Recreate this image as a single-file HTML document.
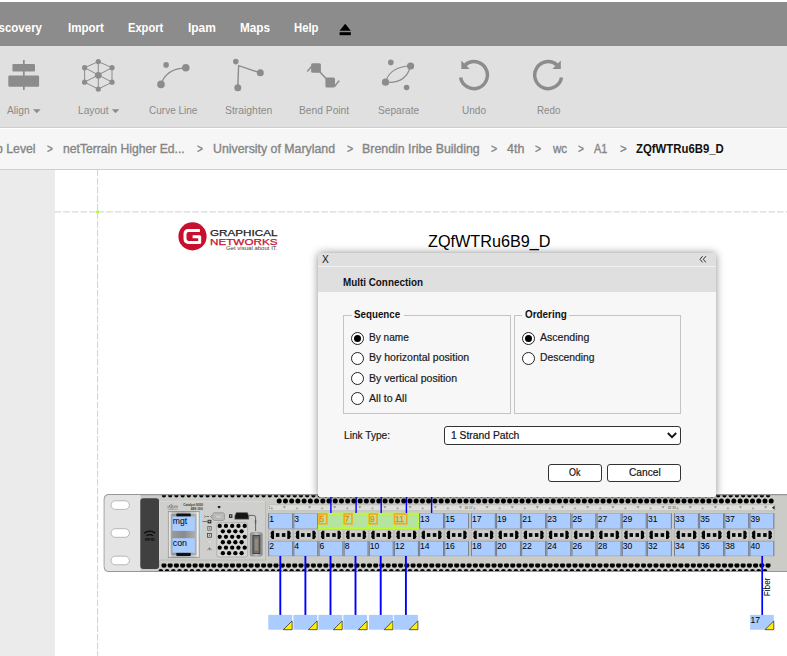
<!DOCTYPE html>
<html><head><meta charset="utf-8"><title>Multi Connection</title>
<style>
*{box-sizing:border-box}
html,body{margin:0;padding:0}
body{width:787px;height:656px;overflow:hidden;position:relative;background:#fff;font-family:"Liberation Sans",sans-serif}
.abs{position:absolute}
.tx{position:absolute;white-space:nowrap;display:inline-block;transform-origin:0 50%}
#menubar{left:0;top:2px;width:787px;height:43.5px;background:#8c8c8c}
#toolbar{left:0;top:45.5px;width:787px;height:82.5px;background:#e0e0e0;border-bottom:1px solid #cdcdcd}
#crumbs{left:0;top:128.5px;width:787px;height:41px;background:#f6f6f6;border-bottom:1px solid #cecece}
#leftpanel{left:0;top:169.5px;width:54.6px;height:487px;background:#ebebeb}
#canvas{left:54.6px;top:169.5px;width:733px;height:487px;background:#fff}
svg{position:absolute;left:0;top:0;overflow:hidden}
svg text{font-family:"Liberation Sans",sans-serif}
#dialog{left:317.5px;top:253.3px;width:398.7px;height:243.4px;background:#f7f7f7;border-radius:3px;box-shadow:0 0 8px rgba(0,0,0,.45)}
#dlgtop{left:0;top:0;width:100%;height:39px;background:#dfdfdf;border-radius:3px 3px 0 0}
#dlgsep{left:0;top:12.5px;width:100%;height:1px;background:#f0f0f0}
#dlgbody{left:0;top:38.4px;width:100%;height:205px;background:#f7f7f7;border-radius:3px}
.fs{position:absolute;border:1px solid #c4c4c4}
.lg{position:absolute;background:#f7f7f7;height:3px}
.radio{position:absolute;width:13px;height:13px;border-radius:50%;border:1px solid #222;background:#fff}
.radio.on::after{content:"";position:absolute;left:2px;top:2px;width:7px;height:7px;border-radius:50%;background:#000}
.btn{position:absolute;border:1px solid #333;border-radius:3px;background:#fff}

</style></head><body>
<div id="menubar" class="abs"></div>
<div id="toolbar" class="abs"></div>
<div id="crumbs" class="abs"></div>
<div id="leftpanel" class="abs"></div>
<div id="canvas" class="abs"></div>
<svg id="icons" width="787" height="170" viewBox="0 0 787 170">
<!-- eject -->
<path d="M339.6 30.8 L345.2 23.8 L350.8 30.8 Z" fill="#000"/><rect x="339.6" y="32.2" width="11.2" height="3" fill="#000"/>
<g fill="#8c8c8c" stroke="none">
<!-- align -->
<rect x="23" y="60" width="1.7" height="30"/><rect x="12.4" y="64" width="22.6" height="7.5" rx="1"/><rect x="8.3" y="75.6" width="30.8" height="11.1" rx="1.2"/>
<!-- caret -->
<path d="M33 109.2 h7.6 l-3.8 4 z"/><path d="M111.8 109.2 h7.6 l-3.8 4 z"/>
</g>
<!-- layout -->
<g stroke="#8c8c8c" stroke-width="1" fill="none">
<path d="M98.3 61.6 L112 67.7 L112 82.2 L98.3 89.1 L84.6 82.2 L84.6 67.7 Z"/>
<path d="M98.3 61.6 V89.1 M84.6 67.7 L112 82.2 M112 67.7 L84.6 82.2"/>
</g>
<g fill="#8c8c8c">
<circle cx="98.3" cy="61.6" r="2.6"/><circle cx="112" cy="67.7" r="2.6"/><circle cx="112" cy="82.2" r="2.6"/><circle cx="98.3" cy="89.1" r="2.6"/><circle cx="84.6" cy="82.2" r="2.6"/><circle cx="84.6" cy="67.7" r="2.6"/><circle cx="98.3" cy="75.3" r="3.4"/>
</g>
<!-- curve line -->
<path d="M161 84.4 Q166 68.5 185.8 67.8" stroke="#8c8c8c" stroke-width="1.3" fill="none"/>
<g fill="#8c8c8c"><circle cx="161" cy="84.4" r="3.8"/><circle cx="185.8" cy="67.8" r="3.8"/><circle cx="166.1" cy="64.9" r="2.8"/></g>
<!-- straighten -->
<path d="M260.3 72.8 L238.6 65.7 L237.8 87.7" stroke="#8c8c8c" stroke-width="1.4" fill="none"/>
<g fill="#8c8c8c"><circle cx="235.8" cy="61.6" r="2.8"/><circle cx="260.3" cy="72.8" r="3.5"/><circle cx="237.8" cy="87.7" r="3.5"/></g>
<!-- bend point -->
<g fill="#8c8c8c"><rect x="311.1" y="63.2" width="9.8" height="9.6" rx="1.5"/><rect x="325.4" y="77.6" width="9.6" height="10" rx="1.5"/></g>
<path d="M307.3 71.5 L312 66 M319 71 L327 79.5 M334.5 86.5 L339.2 80.6" stroke="#8c8c8c" stroke-width="1.5" fill="none"/>
<!-- separate -->
<path d="M385.5 82.2 Q390 66.5 410.6 66 M385.5 82.2 Q406 84 410.6 66" stroke="#8c8c8c" stroke-width="1.1" fill="none"/>
<g fill="#8c8c8c"><circle cx="385.5" cy="82.2" r="3.6"/><circle cx="410.6" cy="66" r="3.6"/><circle cx="390.8" cy="62.4" r="2.8"/><circle cx="406.6" cy="87.5" r="2.8"/></g>
<!-- undo -->
<path d="M465.2 64.8 A13.5 13.5 0 1 1 460.6 77.5" stroke="#8c8c8c" stroke-width="3.5" fill="none"/>
<path d="M461.3 60.6 L461.3 69 L469.7 69 Z" fill="#8c8c8c"/>
<!-- redo -->
<path d="M556.9 64.8 A13.5 13.5 0 1 0 561.5 77.5" stroke="#8c8c8c" stroke-width="3.5" fill="none"/>
<path d="M560.8 60.6 L560.8 69 L552.4 69 Z" fill="#8c8c8c"/>
</svg>
<svg id="diagram" width="787" height="656" viewBox="0 0 787 656">
<path d="M97.6 169.5 V656" stroke="#cccccc" stroke-width="0.9" stroke-dasharray="6.7 1.9" fill="none"/>
<path d="M54.6 211.9 H787" stroke="#dadada" stroke-width="1.4" stroke-dasharray="6.7 1.9" fill="none"/>
<rect x="96.2" y="210.7" width="2.7" height="2.5" fill="#b2f52a"/>
<circle cx="192.5" cy="236.4" r="14.1" fill="#c8102e"/>
<path d="M199.9 230.6 H188.6 Q185 230.6 185 234.2 V238.8 Q185 242.4 188.6 242.4 H199.7 V236.7 H192.6" stroke="#fff" stroke-width="3" fill="none" stroke-linejoin="round"/>
<text x="210" y="236.1" font-size="8.7" fill="#222" stroke="#222" stroke-width="0.25" textLength="67.5" lengthAdjust="spacingAndGlyphs">GRAPHICAL</text>
<text x="210" y="244.8" font-size="8.7" fill="#c8102e" stroke="#c8102e" stroke-width="0.25" textLength="67.5" lengthAdjust="spacingAndGlyphs">NETWORKS</text>
<text x="226" y="250.2" font-size="4.6" fill="#444" textLength="51.5" lengthAdjust="spacingAndGlyphs">Get visual about IT.</text>
<path d="M109.5 494.6 H800 V571.5 H109.5 Q104.2 571.5 104.2 566.5 V499.6 Q104.2 494.6 109.5 494.6 Z" fill="#cbcbc8" stroke="#979797" stroke-width="1.1"/>
<path d="M109.5 495 H140.5 V571.1 H109.5 Q104.6 571.1 104.6 566.5 V499.6 Q104.6 495 109.5 495 Z" fill="#e4e4e4"/>
<rect x="111" y="500.8" width="18.4" height="8.6" rx="4.3" fill="#fff" stroke="#b0b0b0" stroke-width="0.9"/>
<rect x="111" y="528.7" width="18.4" height="8.6" rx="4.3" fill="#fff" stroke="#b0b0b0" stroke-width="0.9"/>
<rect x="111" y="556.2" width="18.4" height="8.6" rx="4.3" fill="#fff" stroke="#b0b0b0" stroke-width="0.9"/>
<rect x="140.3" y="498.3" width="18.8" height="70.6" rx="3" fill="#404040"/>
<path d="M144.2 533.3 Q149.7 529 155.3 533.3" stroke="#0a0a0a" stroke-width="1.3" fill="none"/><path d="M146.4 535.8 Q149.7 533.4 153 535.8" stroke="#0a0a0a" stroke-width="1.2" fill="none"/>
<text x="145.1" y="540.6" font-size="3.4" font-weight="bold" fill="#0a0a0a" textLength="9.8" lengthAdjust="spacingAndGlyphs">RFID</text>
<g fill="#000">
<clipPath id="cl"><rect x="100" y="495.3" width="700" height="75.7"/></clipPath>
<clipPath id="cl2"><rect x="100" y="563.5" width="700" height="10"/></clipPath>
<g clip-path="url(#cl)">
<circle cx="163.95" cy="495.4" r="2.1"/><circle cx="170.18" cy="495.4" r="2.1"/><circle cx="176.41" cy="495.4" r="2.1"/><circle cx="182.63" cy="495.4" r="2.1"/><circle cx="188.86" cy="495.4" r="2.1"/><circle cx="195.09" cy="495.4" r="2.1"/><circle cx="201.32" cy="495.4" r="2.1"/><circle cx="207.55" cy="495.4" r="2.1"/><circle cx="213.77" cy="495.4" r="2.1"/><circle cx="220.00" cy="495.4" r="2.1"/><circle cx="226.23" cy="495.4" r="2.1"/><circle cx="232.46" cy="495.4" r="2.1"/><circle cx="238.69" cy="495.4" r="2.1"/><circle cx="244.91" cy="495.4" r="2.1"/><circle cx="251.14" cy="495.4" r="2.1"/><circle cx="257.37" cy="495.4" r="2.1"/><circle cx="263.60" cy="495.4" r="2.1"/><circle cx="269.83" cy="495.4" r="2.1"/><circle cx="276.05" cy="495.4" r="2.1"/><circle cx="282.28" cy="495.4" r="2.1"/><circle cx="288.51" cy="495.4" r="2.1"/><circle cx="294.74" cy="495.4" r="2.1"/><circle cx="300.97" cy="495.4" r="2.1"/><circle cx="307.19" cy="495.4" r="2.1"/><circle cx="313.42" cy="495.4" r="2.1"/><circle cx="319.65" cy="495.4" r="2.1"/><circle cx="325.88" cy="495.4" r="2.1"/><circle cx="332.11" cy="495.4" r="2.1"/><circle cx="338.33" cy="495.4" r="2.1"/><circle cx="344.56" cy="495.4" r="2.1"/><circle cx="350.79" cy="495.4" r="2.1"/><circle cx="357.02" cy="495.4" r="2.1"/><circle cx="363.25" cy="495.4" r="2.1"/><circle cx="369.47" cy="495.4" r="2.1"/><circle cx="375.70" cy="495.4" r="2.1"/><circle cx="381.93" cy="495.4" r="2.1"/><circle cx="388.16" cy="495.4" r="2.1"/><circle cx="394.39" cy="495.4" r="2.1"/><circle cx="400.61" cy="495.4" r="2.1"/><circle cx="406.84" cy="495.4" r="2.1"/><circle cx="413.07" cy="495.4" r="2.1"/><circle cx="419.30" cy="495.4" r="2.1"/><circle cx="425.53" cy="495.4" r="2.1"/><circle cx="431.75" cy="495.4" r="2.1"/><circle cx="437.98" cy="495.4" r="2.1"/><circle cx="444.21" cy="495.4" r="2.1"/><circle cx="450.44" cy="495.4" r="2.1"/><circle cx="456.67" cy="495.4" r="2.1"/><circle cx="462.89" cy="495.4" r="2.1"/><circle cx="469.12" cy="495.4" r="2.1"/><circle cx="475.35" cy="495.4" r="2.1"/><circle cx="481.58" cy="495.4" r="2.1"/><circle cx="487.81" cy="495.4" r="2.1"/><circle cx="494.03" cy="495.4" r="2.1"/><circle cx="500.26" cy="495.4" r="2.1"/><circle cx="506.49" cy="495.4" r="2.1"/><circle cx="512.72" cy="495.4" r="2.1"/><circle cx="518.95" cy="495.4" r="2.1"/><circle cx="525.17" cy="495.4" r="2.1"/><circle cx="531.40" cy="495.4" r="2.1"/><circle cx="537.63" cy="495.4" r="2.1"/><circle cx="543.86" cy="495.4" r="2.1"/><circle cx="550.09" cy="495.4" r="2.1"/><circle cx="556.31" cy="495.4" r="2.1"/><circle cx="562.54" cy="495.4" r="2.1"/><circle cx="568.77" cy="495.4" r="2.1"/><circle cx="575.00" cy="495.4" r="2.1"/><circle cx="581.23" cy="495.4" r="2.1"/><circle cx="587.45" cy="495.4" r="2.1"/><circle cx="593.68" cy="495.4" r="2.1"/><circle cx="599.91" cy="495.4" r="2.1"/><circle cx="606.14" cy="495.4" r="2.1"/><circle cx="612.37" cy="495.4" r="2.1"/><circle cx="618.59" cy="495.4" r="2.1"/><circle cx="624.82" cy="495.4" r="2.1"/><circle cx="631.05" cy="495.4" r="2.1"/><circle cx="637.28" cy="495.4" r="2.1"/><circle cx="643.51" cy="495.4" r="2.1"/><circle cx="649.73" cy="495.4" r="2.1"/><circle cx="655.96" cy="495.4" r="2.1"/><circle cx="662.19" cy="495.4" r="2.1"/><circle cx="668.42" cy="495.4" r="2.1"/><circle cx="674.65" cy="495.4" r="2.1"/><circle cx="680.87" cy="495.4" r="2.1"/><circle cx="687.10" cy="495.4" r="2.1"/><circle cx="693.33" cy="495.4" r="2.1"/><circle cx="699.56" cy="495.4" r="2.1"/><circle cx="705.79" cy="495.4" r="2.1"/><circle cx="712.01" cy="495.4" r="2.1"/><circle cx="718.24" cy="495.4" r="2.1"/><circle cx="724.47" cy="495.4" r="2.1"/><circle cx="730.70" cy="495.4" r="2.1"/><circle cx="736.93" cy="495.4" r="2.1"/><circle cx="743.15" cy="495.4" r="2.1"/><circle cx="749.38" cy="495.4" r="2.1"/><circle cx="755.61" cy="495.4" r="2.1"/><circle cx="761.84" cy="495.4" r="2.1"/><circle cx="768.07" cy="495.4" r="2.1"/>
<circle cx="279.20" cy="500.9" r="2.5"/><circle cx="285.43" cy="500.9" r="2.5"/><circle cx="291.66" cy="500.9" r="2.5"/><circle cx="297.88" cy="500.9" r="2.5"/><circle cx="304.11" cy="500.9" r="2.5"/><circle cx="310.34" cy="500.9" r="2.5"/><circle cx="316.57" cy="500.9" r="2.5"/><circle cx="322.80" cy="500.9" r="2.5"/><circle cx="329.02" cy="500.9" r="2.5"/><circle cx="335.25" cy="500.9" r="2.5"/><circle cx="341.48" cy="500.9" r="2.5"/><circle cx="347.71" cy="500.9" r="2.5"/><circle cx="353.94" cy="500.9" r="2.5"/><circle cx="360.16" cy="500.9" r="2.5"/><circle cx="366.39" cy="500.9" r="2.5"/><circle cx="372.62" cy="500.9" r="2.5"/><circle cx="378.85" cy="500.9" r="2.5"/><circle cx="385.08" cy="500.9" r="2.5"/><circle cx="391.30" cy="500.9" r="2.5"/><circle cx="397.53" cy="500.9" r="2.5"/><circle cx="403.76" cy="500.9" r="2.5"/><circle cx="409.99" cy="500.9" r="2.5"/><circle cx="416.22" cy="500.9" r="2.5"/><circle cx="422.44" cy="500.9" r="2.5"/><circle cx="428.67" cy="500.9" r="2.5"/><circle cx="434.90" cy="500.9" r="2.5"/><circle cx="441.13" cy="500.9" r="2.5"/><circle cx="447.36" cy="500.9" r="2.5"/><circle cx="453.58" cy="500.9" r="2.5"/><circle cx="459.81" cy="500.9" r="2.5"/><circle cx="466.04" cy="500.9" r="2.5"/><circle cx="472.27" cy="500.9" r="2.5"/><circle cx="478.50" cy="500.9" r="2.5"/><circle cx="484.72" cy="500.9" r="2.5"/><circle cx="490.95" cy="500.9" r="2.5"/><circle cx="497.18" cy="500.9" r="2.5"/><circle cx="503.41" cy="500.9" r="2.5"/><circle cx="509.64" cy="500.9" r="2.5"/><circle cx="515.86" cy="500.9" r="2.5"/><circle cx="522.09" cy="500.9" r="2.5"/><circle cx="528.32" cy="500.9" r="2.5"/><circle cx="534.55" cy="500.9" r="2.5"/><circle cx="540.78" cy="500.9" r="2.5"/><circle cx="547.00" cy="500.9" r="2.5"/><circle cx="553.23" cy="500.9" r="2.5"/><circle cx="559.46" cy="500.9" r="2.5"/><circle cx="565.69" cy="500.9" r="2.5"/><circle cx="571.92" cy="500.9" r="2.5"/><circle cx="578.14" cy="500.9" r="2.5"/><circle cx="584.37" cy="500.9" r="2.5"/><circle cx="590.60" cy="500.9" r="2.5"/><circle cx="596.83" cy="500.9" r="2.5"/><circle cx="603.06" cy="500.9" r="2.5"/><circle cx="609.28" cy="500.9" r="2.5"/><circle cx="615.51" cy="500.9" r="2.5"/><circle cx="621.74" cy="500.9" r="2.5"/><circle cx="627.97" cy="500.9" r="2.5"/><circle cx="634.20" cy="500.9" r="2.5"/><circle cx="640.42" cy="500.9" r="2.5"/><circle cx="646.65" cy="500.9" r="2.5"/><circle cx="652.88" cy="500.9" r="2.5"/><circle cx="659.11" cy="500.9" r="2.5"/><circle cx="665.34" cy="500.9" r="2.5"/><circle cx="671.56" cy="500.9" r="2.5"/><circle cx="677.79" cy="500.9" r="2.5"/><circle cx="684.02" cy="500.9" r="2.5"/><circle cx="690.25" cy="500.9" r="2.5"/><circle cx="696.48" cy="500.9" r="2.5"/><circle cx="702.70" cy="500.9" r="2.5"/><circle cx="708.93" cy="500.9" r="2.5"/><circle cx="715.16" cy="500.9" r="2.5"/><circle cx="721.39" cy="500.9" r="2.5"/><circle cx="727.62" cy="500.9" r="2.5"/><circle cx="733.84" cy="500.9" r="2.5"/><circle cx="740.07" cy="500.9" r="2.5"/><circle cx="746.30" cy="500.9" r="2.5"/><circle cx="752.53" cy="500.9" r="2.5"/><circle cx="758.76" cy="500.9" r="2.5"/><circle cx="764.98" cy="500.9" r="2.5"/><circle cx="771.21" cy="500.9" r="2.5"/>
<circle cx="160.85" cy="571.5" r="2.4"/><circle cx="167.08" cy="571.5" r="2.4"/><circle cx="173.31" cy="571.5" r="2.4"/><circle cx="179.53" cy="571.5" r="2.4"/><circle cx="185.76" cy="571.5" r="2.4"/><circle cx="191.99" cy="571.5" r="2.4"/><circle cx="198.22" cy="571.5" r="2.4"/><circle cx="204.45" cy="571.5" r="2.4"/><circle cx="210.67" cy="571.5" r="2.4"/><circle cx="216.90" cy="571.5" r="2.4"/><circle cx="223.13" cy="571.5" r="2.4"/><circle cx="229.36" cy="571.5" r="2.4"/><circle cx="235.59" cy="571.5" r="2.4"/><circle cx="241.81" cy="571.5" r="2.4"/><circle cx="248.04" cy="571.5" r="2.4"/><circle cx="254.27" cy="571.5" r="2.4"/><circle cx="260.50" cy="571.5" r="2.4"/><circle cx="266.73" cy="571.5" r="2.4"/><circle cx="272.95" cy="571.5" r="2.4"/><circle cx="279.18" cy="571.5" r="2.4"/><circle cx="285.41" cy="571.5" r="2.4"/><circle cx="291.64" cy="571.5" r="2.4"/><circle cx="297.87" cy="571.5" r="2.4"/><circle cx="304.09" cy="571.5" r="2.4"/><circle cx="310.32" cy="571.5" r="2.4"/><circle cx="316.55" cy="571.5" r="2.4"/><circle cx="322.78" cy="571.5" r="2.4"/><circle cx="329.01" cy="571.5" r="2.4"/><circle cx="335.23" cy="571.5" r="2.4"/><circle cx="341.46" cy="571.5" r="2.4"/><circle cx="347.69" cy="571.5" r="2.4"/><circle cx="353.92" cy="571.5" r="2.4"/><circle cx="360.15" cy="571.5" r="2.4"/><circle cx="366.37" cy="571.5" r="2.4"/><circle cx="372.60" cy="571.5" r="2.4"/><circle cx="378.83" cy="571.5" r="2.4"/><circle cx="385.06" cy="571.5" r="2.4"/><circle cx="391.29" cy="571.5" r="2.4"/><circle cx="397.51" cy="571.5" r="2.4"/><circle cx="403.74" cy="571.5" r="2.4"/><circle cx="409.97" cy="571.5" r="2.4"/><circle cx="416.20" cy="571.5" r="2.4"/><circle cx="422.43" cy="571.5" r="2.4"/><circle cx="428.65" cy="571.5" r="2.4"/><circle cx="434.88" cy="571.5" r="2.4"/><circle cx="441.11" cy="571.5" r="2.4"/><circle cx="447.34" cy="571.5" r="2.4"/><circle cx="453.57" cy="571.5" r="2.4"/><circle cx="459.79" cy="571.5" r="2.4"/><circle cx="466.02" cy="571.5" r="2.4"/><circle cx="472.25" cy="571.5" r="2.4"/><circle cx="478.48" cy="571.5" r="2.4"/><circle cx="484.71" cy="571.5" r="2.4"/><circle cx="490.93" cy="571.5" r="2.4"/><circle cx="497.16" cy="571.5" r="2.4"/><circle cx="503.39" cy="571.5" r="2.4"/><circle cx="509.62" cy="571.5" r="2.4"/><circle cx="515.85" cy="571.5" r="2.4"/><circle cx="522.07" cy="571.5" r="2.4"/><circle cx="528.30" cy="571.5" r="2.4"/><circle cx="534.53" cy="571.5" r="2.4"/><circle cx="540.76" cy="571.5" r="2.4"/><circle cx="546.99" cy="571.5" r="2.4"/><circle cx="553.21" cy="571.5" r="2.4"/><circle cx="559.44" cy="571.5" r="2.4"/><circle cx="565.67" cy="571.5" r="2.4"/><circle cx="571.90" cy="571.5" r="2.4"/><circle cx="578.13" cy="571.5" r="2.4"/><circle cx="584.35" cy="571.5" r="2.4"/><circle cx="590.58" cy="571.5" r="2.4"/><circle cx="596.81" cy="571.5" r="2.4"/><circle cx="603.04" cy="571.5" r="2.4"/><circle cx="609.27" cy="571.5" r="2.4"/><circle cx="615.49" cy="571.5" r="2.4"/><circle cx="621.72" cy="571.5" r="2.4"/><circle cx="627.95" cy="571.5" r="2.4"/><circle cx="634.18" cy="571.5" r="2.4"/><circle cx="640.41" cy="571.5" r="2.4"/><circle cx="646.63" cy="571.5" r="2.4"/><circle cx="652.86" cy="571.5" r="2.4"/><circle cx="659.09" cy="571.5" r="2.4"/><circle cx="665.32" cy="571.5" r="2.4"/><circle cx="671.55" cy="571.5" r="2.4"/><circle cx="677.77" cy="571.5" r="2.4"/><circle cx="684.00" cy="571.5" r="2.4"/><circle cx="690.23" cy="571.5" r="2.4"/><circle cx="696.46" cy="571.5" r="2.4"/><circle cx="702.69" cy="571.5" r="2.4"/><circle cx="708.91" cy="571.5" r="2.4"/><circle cx="715.14" cy="571.5" r="2.4"/><circle cx="721.37" cy="571.5" r="2.4"/><circle cx="727.60" cy="571.5" r="2.4"/><circle cx="733.83" cy="571.5" r="2.4"/><circle cx="740.05" cy="571.5" r="2.4"/><circle cx="746.28" cy="571.5" r="2.4"/><circle cx="752.51" cy="571.5" r="2.4"/><circle cx="758.74" cy="571.5" r="2.4"/><circle cx="764.97" cy="571.5" r="2.4"/>
</g><g clip-path="url(#cl2)">
<circle cx="163.95" cy="565.2" r="2.5"/><circle cx="170.18" cy="565.2" r="2.5"/><circle cx="176.41" cy="565.2" r="2.5"/><circle cx="182.63" cy="565.2" r="2.5"/><circle cx="188.86" cy="565.2" r="2.5"/><circle cx="195.09" cy="565.2" r="2.5"/><circle cx="201.32" cy="565.2" r="2.5"/><circle cx="207.55" cy="565.2" r="2.5"/><circle cx="213.77" cy="565.2" r="2.5"/><circle cx="220.00" cy="565.2" r="2.5"/><circle cx="226.23" cy="565.2" r="2.5"/><circle cx="232.46" cy="565.2" r="2.5"/><circle cx="238.69" cy="565.2" r="2.5"/><circle cx="244.91" cy="565.2" r="2.5"/><circle cx="251.14" cy="565.2" r="2.5"/><circle cx="257.37" cy="565.2" r="2.5"/><circle cx="263.60" cy="565.2" r="2.5"/><circle cx="269.83" cy="565.2" r="2.5"/><circle cx="276.05" cy="565.2" r="2.5"/><circle cx="282.28" cy="565.2" r="2.5"/><circle cx="288.51" cy="565.2" r="2.5"/><circle cx="294.74" cy="565.2" r="2.5"/><circle cx="300.97" cy="565.2" r="2.5"/><circle cx="307.19" cy="565.2" r="2.5"/><circle cx="313.42" cy="565.2" r="2.5"/><circle cx="319.65" cy="565.2" r="2.5"/><circle cx="325.88" cy="565.2" r="2.5"/><circle cx="332.11" cy="565.2" r="2.5"/><circle cx="338.33" cy="565.2" r="2.5"/><circle cx="344.56" cy="565.2" r="2.5"/><circle cx="350.79" cy="565.2" r="2.5"/><circle cx="357.02" cy="565.2" r="2.5"/><circle cx="363.25" cy="565.2" r="2.5"/><circle cx="369.47" cy="565.2" r="2.5"/><circle cx="375.70" cy="565.2" r="2.5"/><circle cx="381.93" cy="565.2" r="2.5"/><circle cx="388.16" cy="565.2" r="2.5"/><circle cx="394.39" cy="565.2" r="2.5"/><circle cx="400.61" cy="565.2" r="2.5"/><circle cx="406.84" cy="565.2" r="2.5"/><circle cx="413.07" cy="565.2" r="2.5"/><circle cx="419.30" cy="565.2" r="2.5"/><circle cx="425.53" cy="565.2" r="2.5"/><circle cx="431.75" cy="565.2" r="2.5"/><circle cx="437.98" cy="565.2" r="2.5"/><circle cx="444.21" cy="565.2" r="2.5"/><circle cx="450.44" cy="565.2" r="2.5"/><circle cx="456.67" cy="565.2" r="2.5"/><circle cx="462.89" cy="565.2" r="2.5"/><circle cx="469.12" cy="565.2" r="2.5"/><circle cx="475.35" cy="565.2" r="2.5"/><circle cx="481.58" cy="565.2" r="2.5"/><circle cx="487.81" cy="565.2" r="2.5"/><circle cx="494.03" cy="565.2" r="2.5"/><circle cx="500.26" cy="565.2" r="2.5"/><circle cx="506.49" cy="565.2" r="2.5"/><circle cx="512.72" cy="565.2" r="2.5"/><circle cx="518.95" cy="565.2" r="2.5"/><circle cx="525.17" cy="565.2" r="2.5"/><circle cx="531.40" cy="565.2" r="2.5"/><circle cx="537.63" cy="565.2" r="2.5"/><circle cx="543.86" cy="565.2" r="2.5"/><circle cx="550.09" cy="565.2" r="2.5"/><circle cx="556.31" cy="565.2" r="2.5"/><circle cx="562.54" cy="565.2" r="2.5"/><circle cx="568.77" cy="565.2" r="2.5"/><circle cx="575.00" cy="565.2" r="2.5"/><circle cx="581.23" cy="565.2" r="2.5"/><circle cx="587.45" cy="565.2" r="2.5"/><circle cx="593.68" cy="565.2" r="2.5"/><circle cx="599.91" cy="565.2" r="2.5"/><circle cx="606.14" cy="565.2" r="2.5"/><circle cx="612.37" cy="565.2" r="2.5"/><circle cx="618.59" cy="565.2" r="2.5"/><circle cx="624.82" cy="565.2" r="2.5"/><circle cx="631.05" cy="565.2" r="2.5"/><circle cx="637.28" cy="565.2" r="2.5"/><circle cx="643.51" cy="565.2" r="2.5"/><circle cx="649.73" cy="565.2" r="2.5"/><circle cx="655.96" cy="565.2" r="2.5"/><circle cx="662.19" cy="565.2" r="2.5"/><circle cx="668.42" cy="565.2" r="2.5"/><circle cx="674.65" cy="565.2" r="2.5"/><circle cx="680.87" cy="565.2" r="2.5"/><circle cx="687.10" cy="565.2" r="2.5"/><circle cx="693.33" cy="565.2" r="2.5"/><circle cx="699.56" cy="565.2" r="2.5"/><circle cx="705.79" cy="565.2" r="2.5"/><circle cx="712.01" cy="565.2" r="2.5"/><circle cx="718.24" cy="565.2" r="2.5"/><circle cx="724.47" cy="565.2" r="2.5"/><circle cx="730.70" cy="565.2" r="2.5"/><circle cx="736.93" cy="565.2" r="2.5"/><circle cx="743.15" cy="565.2" r="2.5"/><circle cx="749.38" cy="565.2" r="2.5"/><circle cx="755.61" cy="565.2" r="2.5"/><circle cx="761.84" cy="565.2" r="2.5"/><circle cx="768.07" cy="565.2" r="2.5"/>
</g></g>
<rect x="159.6" y="501.4" width="105.8" height="58.6" fill="#cfcfcd" stroke="#b4b4b2" stroke-width="0.8"/>
<path d="M159.6 560 V501.4 H265.4" stroke="#e2e2e0" stroke-width="0.8" fill="none"/>
<path d="M168 506 v1.4 M169.6 505 v2.4 M171.2 504 v3.4 M172.8 505 v2.4 M174.4 506 v1.4 M176 505 v2.4 M177.4 506 v1.4" stroke="#555" stroke-width="0.6" fill="none"/>
<text x="167.8" y="509.6" font-size="2.6" fill="#666" textLength="9.6" lengthAdjust="spacingAndGlyphs">CISCO</text>
<text x="183.2" y="505.9" font-size="3.2" font-weight="bold" fill="#333" textLength="19.8" lengthAdjust="spacingAndGlyphs">Catalyst 9300</text>
<text x="190.8" y="509.5" font-size="3.2" font-weight="bold" fill="#333" textLength="12.2" lengthAdjust="spacingAndGlyphs">48S 10G</text>
<path d="M217.8 506 h2.6 v1.4 l-1.3 1.2 l-1.3 -1.2 z" fill="#222"/>
<defs><linearGradient id="mg" x1="0" x2="1" y1="0" y2="0"><stop offset="0" stop-color="#f4f4f4"/><stop offset="0.12" stop-color="#9a9a9a"/><stop offset="0.5" stop-color="#8a8a8a"/><stop offset="0.88" stop-color="#b0b0b0"/><stop offset="1" stop-color="#f4f4f4"/></linearGradient>
<linearGradient id="ug" x1="0" x2="1" y1="0" y2="0"><stop offset="0" stop-color="#8a8a8a"/><stop offset="0.5" stop-color="#dcdcdc"/><stop offset="1" stop-color="#8a8a8a"/></linearGradient></defs>
<rect x="168.3" y="511.4" width="30.9" height="46.3" fill="url(#mg)" stroke="#8c8c8c" stroke-width="0.7"/>
<rect x="170" y="513" width="27.4" height="43" fill="none" stroke="#fff" stroke-width="0.9" opacity="0.8"/>
<rect x="176.3" y="513.4" width="14.5" height="3.4" rx="1" fill="#111"/><rect x="176.3" y="552.4" width="14.5" height="3.6" rx="1" fill="#111"/>
<rect x="172.4" y="516.5" width="22.4" height="14.4" fill="#aaccff"/><rect x="172.4" y="538.2" width="22.4" height="14.5" fill="#aaccff"/>
<text x="172.7" y="524.4" font-size="9.2" fill="#000" textLength="14.4" lengthAdjust="spacingAndGlyphs">mgt</text>
<text x="172.7" y="546.2" font-size="9.2" fill="#000" textLength="14.4" lengthAdjust="spacingAndGlyphs">con</text>
<rect x="199.9" y="512" width="2.1" height="22.8" fill="#b4dcec"/>
<path d="M204.6 515.4 q1.4 1 0 2.2 M206.4 516.5 h2.6 M211.6 515.4 q-1.6 1.1 0 2.2" stroke="#333" stroke-width="0.6" fill="none"/>
<rect x="212.8" y="512.8" width="11.6" height="7.6" rx="1.6" fill="#bdbdbd" stroke="#8f8f8f" stroke-width="0.8"/><rect x="215.8" y="515" width="5.6" height="3.2" fill="#c9c9c9" stroke="#a5a5a5" stroke-width="0.4"/>
<rect x="229" y="514.3" width="3.4" height="3.6" fill="#222"/><rect x="230" y="515.2" width="1.4" height="1.6" fill="#aaa"/>
<path d="M236.2 512.6 H247.4 L248.8 516 V519.2 H234.8 V516 Z" fill="#151515" stroke="#777" stroke-width="0.6"/>
<path d="M249 515.4 H253.4 Q255.6 515.4 255.6 517.6 V531" stroke="#333" stroke-width="0.7" fill="none"/><path d="M254.7 520.8 h1.8 M254.7 522.6 h1.8" stroke="#333" stroke-width="0.5"/>
<path d="M202.6 521.5 h5" stroke="#333" stroke-width="0.6"/><rect x="207.6" y="519.8" width="3.8" height="3.6" fill="#333"/><rect x="208.6" y="520.7" width="1.6" height="1.4" fill="#bbb"/>
<rect x="207.8" y="526.4" width="3.4" height="3.8" fill="none" stroke="#444" stroke-width="0.6"/><path d="M209.5 527.2 v2.2" stroke="#444" stroke-width="0.5"/>
<rect x="207.6" y="533.4" width="3.8" height="3.8" fill="none" stroke="#333" stroke-width="0.7"/><path d="M209.5 534.4 v1.8" stroke="#333" stroke-width="0.6"/>
<circle cx="209.5" cy="541.8" r="1.8" fill="#ddd" stroke="#bbb" stroke-width="0.4"/>
<path d="M207.4 550.2 L209.5 547.6 L211.6 550.2 M209.5 548 v2.4" stroke="#555" stroke-width="0.6" fill="none"/>
<rect x="216.8" y="522.7" width="30.8" height="34.3" rx="2" fill="#d6d6d4" stroke="#a8a8a8" stroke-width="0.8"/>
<clipPath id="fg"><rect x="217.2" y="523.1" width="30" height="33.5" rx="1.6"/></clipPath><g fill="#000" clip-path="url(#fg)">
<circle cx="219.70" cy="525.90" r="2.15"/>
<circle cx="225.95" cy="525.90" r="2.15"/>
<circle cx="232.20" cy="525.90" r="2.15"/>
<circle cx="238.45" cy="525.90" r="2.15"/>
<circle cx="244.70" cy="525.90" r="2.15"/>
<circle cx="222.85" cy="531.35" r="2.15"/>
<circle cx="229.10" cy="531.35" r="2.15"/>
<circle cx="235.35" cy="531.35" r="2.15"/>
<circle cx="241.60" cy="531.35" r="2.15"/>
<circle cx="219.70" cy="536.80" r="2.15"/>
<circle cx="225.95" cy="536.80" r="2.15"/>
<circle cx="232.20" cy="536.80" r="2.15"/>
<circle cx="238.45" cy="536.80" r="2.15"/>
<circle cx="244.70" cy="536.80" r="2.15"/>
<circle cx="222.85" cy="542.25" r="2.15"/>
<circle cx="229.10" cy="542.25" r="2.15"/>
<circle cx="235.35" cy="542.25" r="2.15"/>
<circle cx="241.60" cy="542.25" r="2.15"/>
<circle cx="219.70" cy="547.70" r="2.15"/>
<circle cx="225.95" cy="547.70" r="2.15"/>
<circle cx="232.20" cy="547.70" r="2.15"/>
<circle cx="238.45" cy="547.70" r="2.15"/>
<circle cx="244.70" cy="547.70" r="2.15"/>
<circle cx="222.85" cy="553.15" r="2.15"/>
<circle cx="229.10" cy="553.15" r="2.15"/>
<circle cx="235.35" cy="553.15" r="2.15"/>
<circle cx="241.60" cy="553.15" r="2.15"/>
</g>
<rect x="250.4" y="532.8" width="11.8" height="23.2" rx="1.4" fill="url(#ug)" stroke="#808080" stroke-width="0.7"/>
<rect x="252.9" y="535.3" width="7" height="18.4" fill="#6e6e6e" stroke="#333" stroke-width="0.9"/><rect x="254.7" y="538.4" width="3.4" height="12.4" fill="#94897a"/>
<rect x="267.6" y="504.7" width="508.1" height="6" rx="1.5" fill="#dededb" stroke="#b6b6b3" stroke-width="0.6"/>
<rect x="267.9" y="529" width="201.6" height="11.8" fill="#b9b9b7"/>
<rect x="269.00" y="530.2" width="23.5" height="9.4" fill="#cdcdcb"/>
<g fill="#050505"><path d="M274.05 530.8 h-2.1 l-1.5 2.3 l0.6 1.8 l-0.6 1.8 l1.5 2.3 h2.1 z"/><path d="M287.25 530.8 h2.1 l1.5 2.3 l-0.6 1.8 l0.6 1.8 l-1.5 2.3 h-2.1 z"/><rect x="275.90" y="533.1" width="3.5" height="3.8"/><rect x="281.90" y="533.1" width="3.5" height="3.8"/></g>
<rect x="268.70" y="513.6" width="23.9" height="14.8" fill="#aaccff" stroke="#97a0b6" stroke-width="0.6"/><path d="M268.70 513.4 v15.2 M292.60 513.4 v15.2" stroke="#6c7180" stroke-width="0.8"/>
<text x="269.20" y="522.1" font-size="8.6" fill="#000">1</text>
<rect x="268.70" y="541.4" width="23.9" height="14.5" fill="#aaccff" stroke="#97a0b6" stroke-width="0.6"/><path d="M268.70 541.2 v14.9 M292.60 541.2 v14.9" stroke="#6c7180" stroke-width="0.8"/>
<text x="269.20" y="549.3" font-size="8.6" fill="#000">2</text>
<rect x="294.15" y="530.2" width="23.5" height="9.4" fill="#cdcdcb"/>
<g fill="#050505"><path d="M299.20 530.8 h-2.1 l-1.5 2.3 l0.6 1.8 l-0.6 1.8 l1.5 2.3 h2.1 z"/><path d="M312.40 530.8 h2.1 l1.5 2.3 l-0.6 1.8 l0.6 1.8 l-1.5 2.3 h-2.1 z"/><rect x="301.05" y="533.1" width="3.5" height="3.8"/><rect x="307.05" y="533.1" width="3.5" height="3.8"/></g>
<rect x="293.85" y="513.6" width="23.9" height="14.8" fill="#aaccff" stroke="#97a0b6" stroke-width="0.6"/><path d="M293.85 513.4 v15.2 M317.75 513.4 v15.2" stroke="#6c7180" stroke-width="0.8"/>
<text x="294.35" y="522.1" font-size="8.6" fill="#000">3</text>
<rect x="293.85" y="541.4" width="23.9" height="14.5" fill="#aaccff" stroke="#97a0b6" stroke-width="0.6"/><path d="M293.85 541.2 v14.9 M317.75 541.2 v14.9" stroke="#6c7180" stroke-width="0.8"/>
<text x="294.35" y="549.3" font-size="8.6" fill="#000">4</text>
<rect x="319.30" y="530.2" width="23.5" height="9.4" fill="#cdcdcb"/>
<g fill="#050505"><path d="M324.35 530.8 h-2.1 l-1.5 2.3 l0.6 1.8 l-0.6 1.8 l1.5 2.3 h2.1 z"/><path d="M337.55 530.8 h2.1 l1.5 2.3 l-0.6 1.8 l0.6 1.8 l-1.5 2.3 h-2.1 z"/><rect x="326.20" y="533.1" width="3.5" height="3.8"/><rect x="332.20" y="533.1" width="3.5" height="3.8"/></g>
<rect x="319.00" y="513.7" width="24.6" height="14.9" fill="#b5e4a0" stroke="#bffa30" stroke-width="2"/>
<rect x="319.00" y="514" width="7.8" height="9.8" fill="none" stroke="#f2a722" stroke-width="1.6"/>
<text x="319.60" y="522.1" font-size="8.8" fill="#f58800" stroke="#f58800" stroke-width="0.3" textLength="4.8" lengthAdjust="spacingAndGlyphs">5</text>
<rect x="319.00" y="541.4" width="23.9" height="14.5" fill="#aaccff" stroke="#97a0b6" stroke-width="0.6"/><path d="M319.00 541.2 v14.9 M342.90 541.2 v14.9" stroke="#6c7180" stroke-width="0.8"/>
<text x="319.50" y="549.3" font-size="8.6" fill="#000">6</text>
<rect x="344.45" y="530.2" width="23.5" height="9.4" fill="#cdcdcb"/>
<g fill="#050505"><path d="M349.50 530.8 h-2.1 l-1.5 2.3 l0.6 1.8 l-0.6 1.8 l1.5 2.3 h2.1 z"/><path d="M362.70 530.8 h2.1 l1.5 2.3 l-0.6 1.8 l0.6 1.8 l-1.5 2.3 h-2.1 z"/><rect x="351.35" y="533.1" width="3.5" height="3.8"/><rect x="357.35" y="533.1" width="3.5" height="3.8"/></g>
<rect x="344.15" y="513.7" width="24.6" height="14.9" fill="#b5e4a0" stroke="#bffa30" stroke-width="2"/>
<rect x="344.15" y="514" width="7.8" height="9.8" fill="none" stroke="#f2a722" stroke-width="1.6"/>
<text x="344.75" y="522.1" font-size="8.8" fill="#f58800" stroke="#f58800" stroke-width="0.3" textLength="4.8" lengthAdjust="spacingAndGlyphs">7</text>
<rect x="344.15" y="541.4" width="23.9" height="14.5" fill="#aaccff" stroke="#97a0b6" stroke-width="0.6"/><path d="M344.15 541.2 v14.9 M368.05 541.2 v14.9" stroke="#6c7180" stroke-width="0.8"/>
<text x="344.65" y="549.3" font-size="8.6" fill="#000">8</text>
<rect x="369.60" y="530.2" width="23.5" height="9.4" fill="#cdcdcb"/>
<g fill="#050505"><path d="M374.65 530.8 h-2.1 l-1.5 2.3 l0.6 1.8 l-0.6 1.8 l1.5 2.3 h2.1 z"/><path d="M387.85 530.8 h2.1 l1.5 2.3 l-0.6 1.8 l0.6 1.8 l-1.5 2.3 h-2.1 z"/><rect x="376.50" y="533.1" width="3.5" height="3.8"/><rect x="382.50" y="533.1" width="3.5" height="3.8"/></g>
<rect x="369.30" y="513.7" width="24.6" height="14.9" fill="#b5e4a0" stroke="#bffa30" stroke-width="2"/>
<rect x="369.30" y="514" width="7.8" height="9.8" fill="none" stroke="#f2a722" stroke-width="1.6"/>
<text x="369.90" y="522.1" font-size="8.8" fill="#f58800" stroke="#f58800" stroke-width="0.3" textLength="4.8" lengthAdjust="spacingAndGlyphs">9</text>
<rect x="369.30" y="541.4" width="23.9" height="14.5" fill="#aaccff" stroke="#97a0b6" stroke-width="0.6"/><path d="M369.30 541.2 v14.9 M393.20 541.2 v14.9" stroke="#6c7180" stroke-width="0.8"/>
<text x="369.80" y="549.3" font-size="8.6" fill="#000">10</text>
<rect x="394.75" y="530.2" width="23.5" height="9.4" fill="#cdcdcb"/>
<g fill="#050505"><path d="M399.80 530.8 h-2.1 l-1.5 2.3 l0.6 1.8 l-0.6 1.8 l1.5 2.3 h2.1 z"/><path d="M413.00 530.8 h2.1 l1.5 2.3 l-0.6 1.8 l0.6 1.8 l-1.5 2.3 h-2.1 z"/><rect x="401.65" y="533.1" width="3.5" height="3.8"/><rect x="407.65" y="533.1" width="3.5" height="3.8"/></g>
<rect x="394.45" y="513.7" width="24.6" height="14.9" fill="#b5e4a0" stroke="#bffa30" stroke-width="2"/>
<rect x="394.45" y="514" width="12.3" height="9.8" fill="none" stroke="#f2a722" stroke-width="1.6"/>
<text x="395.05" y="522.1" font-size="8.8" fill="#f58800" stroke="#f58800" stroke-width="0.3" textLength="9.3" lengthAdjust="spacingAndGlyphs">11</text>
<rect x="394.45" y="541.4" width="23.9" height="14.5" fill="#aaccff" stroke="#97a0b6" stroke-width="0.6"/><path d="M394.45 541.2 v14.9 M418.35 541.2 v14.9" stroke="#6c7180" stroke-width="0.8"/>
<text x="394.95" y="549.3" font-size="8.6" fill="#000">12</text>
<rect x="419.90" y="530.2" width="23.5" height="9.4" fill="#cdcdcb"/>
<g fill="#050505"><path d="M424.95 530.8 h-2.1 l-1.5 2.3 l0.6 1.8 l-0.6 1.8 l1.5 2.3 h2.1 z"/><path d="M438.15 530.8 h2.1 l1.5 2.3 l-0.6 1.8 l0.6 1.8 l-1.5 2.3 h-2.1 z"/><rect x="426.80" y="533.1" width="3.5" height="3.8"/><rect x="432.80" y="533.1" width="3.5" height="3.8"/></g>
<rect x="419.60" y="513.6" width="23.9" height="14.8" fill="#aaccff" stroke="#97a0b6" stroke-width="0.6"/><path d="M419.60 513.4 v15.2 M443.50 513.4 v15.2" stroke="#6c7180" stroke-width="0.8"/>
<text x="420.10" y="522.1" font-size="8.6" fill="#000">13</text>
<rect x="419.60" y="541.4" width="23.9" height="14.5" fill="#aaccff" stroke="#97a0b6" stroke-width="0.6"/><path d="M419.60 541.2 v14.9 M443.50 541.2 v14.9" stroke="#6c7180" stroke-width="0.8"/>
<text x="420.10" y="549.3" font-size="8.6" fill="#000">14</text>
<rect x="445.05" y="530.2" width="23.5" height="9.4" fill="#cdcdcb"/>
<g fill="#050505"><path d="M450.10 530.8 h-2.1 l-1.5 2.3 l0.6 1.8 l-0.6 1.8 l1.5 2.3 h2.1 z"/><path d="M463.30 530.8 h2.1 l1.5 2.3 l-0.6 1.8 l0.6 1.8 l-1.5 2.3 h-2.1 z"/><rect x="451.95" y="533.1" width="3.5" height="3.8"/><rect x="457.95" y="533.1" width="3.5" height="3.8"/></g>
<rect x="444.75" y="513.6" width="23.9" height="14.8" fill="#aaccff" stroke="#97a0b6" stroke-width="0.6"/><path d="M444.75 513.4 v15.2 M468.65 513.4 v15.2" stroke="#6c7180" stroke-width="0.8"/>
<text x="445.25" y="522.1" font-size="8.6" fill="#000">15</text>
<rect x="444.75" y="541.4" width="23.9" height="14.5" fill="#aaccff" stroke="#97a0b6" stroke-width="0.6"/><path d="M444.75 541.2 v14.9 M468.65 541.2 v14.9" stroke="#6c7180" stroke-width="0.8"/>
<text x="445.25" y="549.3" font-size="8.6" fill="#000">16</text>
<rect x="470.6" y="529" width="201.6" height="11.8" fill="#b9b9b7"/>
<rect x="471.70" y="530.2" width="23.5" height="9.4" fill="#cdcdcb"/>
<g fill="#050505"><path d="M476.75 530.8 h-2.1 l-1.5 2.3 l0.6 1.8 l-0.6 1.8 l1.5 2.3 h2.1 z"/><path d="M489.95 530.8 h2.1 l1.5 2.3 l-0.6 1.8 l0.6 1.8 l-1.5 2.3 h-2.1 z"/><rect x="478.60" y="533.1" width="3.5" height="3.8"/><rect x="484.60" y="533.1" width="3.5" height="3.8"/></g>
<rect x="471.40" y="513.6" width="23.9" height="14.8" fill="#aaccff" stroke="#97a0b6" stroke-width="0.6"/><path d="M471.40 513.4 v15.2 M495.30 513.4 v15.2" stroke="#6c7180" stroke-width="0.8"/>
<text x="471.90" y="522.1" font-size="8.6" fill="#000">17</text>
<rect x="471.40" y="541.4" width="23.9" height="14.5" fill="#aaccff" stroke="#97a0b6" stroke-width="0.6"/><path d="M471.40 541.2 v14.9 M495.30 541.2 v14.9" stroke="#6c7180" stroke-width="0.8"/>
<text x="471.90" y="549.3" font-size="8.6" fill="#000">18</text>
<rect x="496.85" y="530.2" width="23.5" height="9.4" fill="#cdcdcb"/>
<g fill="#050505"><path d="M501.90 530.8 h-2.1 l-1.5 2.3 l0.6 1.8 l-0.6 1.8 l1.5 2.3 h2.1 z"/><path d="M515.10 530.8 h2.1 l1.5 2.3 l-0.6 1.8 l0.6 1.8 l-1.5 2.3 h-2.1 z"/><rect x="503.75" y="533.1" width="3.5" height="3.8"/><rect x="509.75" y="533.1" width="3.5" height="3.8"/></g>
<rect x="496.55" y="513.6" width="23.9" height="14.8" fill="#aaccff" stroke="#97a0b6" stroke-width="0.6"/><path d="M496.55 513.4 v15.2 M520.45 513.4 v15.2" stroke="#6c7180" stroke-width="0.8"/>
<text x="497.05" y="522.1" font-size="8.6" fill="#000">19</text>
<rect x="496.55" y="541.4" width="23.9" height="14.5" fill="#aaccff" stroke="#97a0b6" stroke-width="0.6"/><path d="M496.55 541.2 v14.9 M520.45 541.2 v14.9" stroke="#6c7180" stroke-width="0.8"/>
<text x="497.05" y="549.3" font-size="8.6" fill="#000">20</text>
<rect x="522.00" y="530.2" width="23.5" height="9.4" fill="#cdcdcb"/>
<g fill="#050505"><path d="M527.05 530.8 h-2.1 l-1.5 2.3 l0.6 1.8 l-0.6 1.8 l1.5 2.3 h2.1 z"/><path d="M540.25 530.8 h2.1 l1.5 2.3 l-0.6 1.8 l0.6 1.8 l-1.5 2.3 h-2.1 z"/><rect x="528.90" y="533.1" width="3.5" height="3.8"/><rect x="534.90" y="533.1" width="3.5" height="3.8"/></g>
<rect x="521.70" y="513.6" width="23.9" height="14.8" fill="#aaccff" stroke="#97a0b6" stroke-width="0.6"/><path d="M521.70 513.4 v15.2 M545.60 513.4 v15.2" stroke="#6c7180" stroke-width="0.8"/>
<text x="522.20" y="522.1" font-size="8.6" fill="#000">21</text>
<rect x="521.70" y="541.4" width="23.9" height="14.5" fill="#aaccff" stroke="#97a0b6" stroke-width="0.6"/><path d="M521.70 541.2 v14.9 M545.60 541.2 v14.9" stroke="#6c7180" stroke-width="0.8"/>
<text x="522.20" y="549.3" font-size="8.6" fill="#000">22</text>
<rect x="547.15" y="530.2" width="23.5" height="9.4" fill="#cdcdcb"/>
<g fill="#050505"><path d="M552.20 530.8 h-2.1 l-1.5 2.3 l0.6 1.8 l-0.6 1.8 l1.5 2.3 h2.1 z"/><path d="M565.40 530.8 h2.1 l1.5 2.3 l-0.6 1.8 l0.6 1.8 l-1.5 2.3 h-2.1 z"/><rect x="554.05" y="533.1" width="3.5" height="3.8"/><rect x="560.05" y="533.1" width="3.5" height="3.8"/></g>
<rect x="546.85" y="513.6" width="23.9" height="14.8" fill="#aaccff" stroke="#97a0b6" stroke-width="0.6"/><path d="M546.85 513.4 v15.2 M570.75 513.4 v15.2" stroke="#6c7180" stroke-width="0.8"/>
<text x="547.35" y="522.1" font-size="8.6" fill="#000">23</text>
<rect x="546.85" y="541.4" width="23.9" height="14.5" fill="#aaccff" stroke="#97a0b6" stroke-width="0.6"/><path d="M546.85 541.2 v14.9 M570.75 541.2 v14.9" stroke="#6c7180" stroke-width="0.8"/>
<text x="547.35" y="549.3" font-size="8.6" fill="#000">24</text>
<rect x="572.30" y="530.2" width="23.5" height="9.4" fill="#cdcdcb"/>
<g fill="#050505"><path d="M577.35 530.8 h-2.1 l-1.5 2.3 l0.6 1.8 l-0.6 1.8 l1.5 2.3 h2.1 z"/><path d="M590.55 530.8 h2.1 l1.5 2.3 l-0.6 1.8 l0.6 1.8 l-1.5 2.3 h-2.1 z"/><rect x="579.20" y="533.1" width="3.5" height="3.8"/><rect x="585.20" y="533.1" width="3.5" height="3.8"/></g>
<rect x="572.00" y="513.6" width="23.9" height="14.8" fill="#aaccff" stroke="#97a0b6" stroke-width="0.6"/><path d="M572.00 513.4 v15.2 M595.90 513.4 v15.2" stroke="#6c7180" stroke-width="0.8"/>
<text x="572.50" y="522.1" font-size="8.6" fill="#000">25</text>
<rect x="572.00" y="541.4" width="23.9" height="14.5" fill="#aaccff" stroke="#97a0b6" stroke-width="0.6"/><path d="M572.00 541.2 v14.9 M595.90 541.2 v14.9" stroke="#6c7180" stroke-width="0.8"/>
<text x="572.50" y="549.3" font-size="8.6" fill="#000">26</text>
<rect x="597.45" y="530.2" width="23.5" height="9.4" fill="#cdcdcb"/>
<g fill="#050505"><path d="M602.50 530.8 h-2.1 l-1.5 2.3 l0.6 1.8 l-0.6 1.8 l1.5 2.3 h2.1 z"/><path d="M615.70 530.8 h2.1 l1.5 2.3 l-0.6 1.8 l0.6 1.8 l-1.5 2.3 h-2.1 z"/><rect x="604.35" y="533.1" width="3.5" height="3.8"/><rect x="610.35" y="533.1" width="3.5" height="3.8"/></g>
<rect x="597.15" y="513.6" width="23.9" height="14.8" fill="#aaccff" stroke="#97a0b6" stroke-width="0.6"/><path d="M597.15 513.4 v15.2 M621.05 513.4 v15.2" stroke="#6c7180" stroke-width="0.8"/>
<text x="597.65" y="522.1" font-size="8.6" fill="#000">27</text>
<rect x="597.15" y="541.4" width="23.9" height="14.5" fill="#aaccff" stroke="#97a0b6" stroke-width="0.6"/><path d="M597.15 541.2 v14.9 M621.05 541.2 v14.9" stroke="#6c7180" stroke-width="0.8"/>
<text x="597.65" y="549.3" font-size="8.6" fill="#000">28</text>
<rect x="622.60" y="530.2" width="23.5" height="9.4" fill="#cdcdcb"/>
<g fill="#050505"><path d="M627.65 530.8 h-2.1 l-1.5 2.3 l0.6 1.8 l-0.6 1.8 l1.5 2.3 h2.1 z"/><path d="M640.85 530.8 h2.1 l1.5 2.3 l-0.6 1.8 l0.6 1.8 l-1.5 2.3 h-2.1 z"/><rect x="629.50" y="533.1" width="3.5" height="3.8"/><rect x="635.50" y="533.1" width="3.5" height="3.8"/></g>
<rect x="622.30" y="513.6" width="23.9" height="14.8" fill="#aaccff" stroke="#97a0b6" stroke-width="0.6"/><path d="M622.30 513.4 v15.2 M646.20 513.4 v15.2" stroke="#6c7180" stroke-width="0.8"/>
<text x="622.80" y="522.1" font-size="8.6" fill="#000">29</text>
<rect x="622.30" y="541.4" width="23.9" height="14.5" fill="#aaccff" stroke="#97a0b6" stroke-width="0.6"/><path d="M622.30 541.2 v14.9 M646.20 541.2 v14.9" stroke="#6c7180" stroke-width="0.8"/>
<text x="622.80" y="549.3" font-size="8.6" fill="#000">30</text>
<rect x="647.75" y="530.2" width="23.5" height="9.4" fill="#cdcdcb"/>
<g fill="#050505"><path d="M652.80 530.8 h-2.1 l-1.5 2.3 l0.6 1.8 l-0.6 1.8 l1.5 2.3 h2.1 z"/><path d="M666.00 530.8 h2.1 l1.5 2.3 l-0.6 1.8 l0.6 1.8 l-1.5 2.3 h-2.1 z"/><rect x="654.65" y="533.1" width="3.5" height="3.8"/><rect x="660.65" y="533.1" width="3.5" height="3.8"/></g>
<rect x="647.45" y="513.6" width="23.9" height="14.8" fill="#aaccff" stroke="#97a0b6" stroke-width="0.6"/><path d="M647.45 513.4 v15.2 M671.35 513.4 v15.2" stroke="#6c7180" stroke-width="0.8"/>
<text x="647.95" y="522.1" font-size="8.6" fill="#000">31</text>
<rect x="647.45" y="541.4" width="23.9" height="14.5" fill="#aaccff" stroke="#97a0b6" stroke-width="0.6"/><path d="M647.45 541.2 v14.9 M671.35 541.2 v14.9" stroke="#6c7180" stroke-width="0.8"/>
<text x="647.95" y="549.3" font-size="8.6" fill="#000">32</text>
<rect x="673.7" y="529" width="101.0" height="11.8" fill="#b9b9b7"/>
<rect x="674.80" y="530.2" width="23.5" height="9.4" fill="#cdcdcb"/>
<g fill="#050505"><path d="M679.85 530.8 h-2.1 l-1.5 2.3 l0.6 1.8 l-0.6 1.8 l1.5 2.3 h2.1 z"/><path d="M693.05 530.8 h2.1 l1.5 2.3 l-0.6 1.8 l0.6 1.8 l-1.5 2.3 h-2.1 z"/><rect x="681.70" y="533.1" width="3.5" height="3.8"/><rect x="687.70" y="533.1" width="3.5" height="3.8"/></g>
<rect x="674.50" y="513.6" width="23.9" height="14.8" fill="#aaccff" stroke="#97a0b6" stroke-width="0.6"/><path d="M674.50 513.4 v15.2 M698.40 513.4 v15.2" stroke="#6c7180" stroke-width="0.8"/>
<text x="675.00" y="522.1" font-size="8.6" fill="#000">33</text>
<rect x="674.50" y="541.4" width="23.9" height="14.5" fill="#aaccff" stroke="#97a0b6" stroke-width="0.6"/><path d="M674.50 541.2 v14.9 M698.40 541.2 v14.9" stroke="#6c7180" stroke-width="0.8"/>
<text x="675.00" y="549.3" font-size="8.6" fill="#000">34</text>
<rect x="699.95" y="530.2" width="23.5" height="9.4" fill="#cdcdcb"/>
<g fill="#050505"><path d="M705.00 530.8 h-2.1 l-1.5 2.3 l0.6 1.8 l-0.6 1.8 l1.5 2.3 h2.1 z"/><path d="M718.20 530.8 h2.1 l1.5 2.3 l-0.6 1.8 l0.6 1.8 l-1.5 2.3 h-2.1 z"/><rect x="706.85" y="533.1" width="3.5" height="3.8"/><rect x="712.85" y="533.1" width="3.5" height="3.8"/></g>
<rect x="699.65" y="513.6" width="23.9" height="14.8" fill="#aaccff" stroke="#97a0b6" stroke-width="0.6"/><path d="M699.65 513.4 v15.2 M723.55 513.4 v15.2" stroke="#6c7180" stroke-width="0.8"/>
<text x="700.15" y="522.1" font-size="8.6" fill="#000">35</text>
<rect x="699.65" y="541.4" width="23.9" height="14.5" fill="#aaccff" stroke="#97a0b6" stroke-width="0.6"/><path d="M699.65 541.2 v14.9 M723.55 541.2 v14.9" stroke="#6c7180" stroke-width="0.8"/>
<text x="700.15" y="549.3" font-size="8.6" fill="#000">36</text>
<rect x="725.10" y="530.2" width="23.5" height="9.4" fill="#cdcdcb"/>
<g fill="#050505"><path d="M730.15 530.8 h-2.1 l-1.5 2.3 l0.6 1.8 l-0.6 1.8 l1.5 2.3 h2.1 z"/><path d="M743.35 530.8 h2.1 l1.5 2.3 l-0.6 1.8 l0.6 1.8 l-1.5 2.3 h-2.1 z"/><rect x="732.00" y="533.1" width="3.5" height="3.8"/><rect x="738.00" y="533.1" width="3.5" height="3.8"/></g>
<rect x="724.80" y="513.6" width="23.9" height="14.8" fill="#aaccff" stroke="#97a0b6" stroke-width="0.6"/><path d="M724.80 513.4 v15.2 M748.70 513.4 v15.2" stroke="#6c7180" stroke-width="0.8"/>
<text x="725.30" y="522.1" font-size="8.6" fill="#000">37</text>
<rect x="724.80" y="541.4" width="23.9" height="14.5" fill="#aaccff" stroke="#97a0b6" stroke-width="0.6"/><path d="M724.80 541.2 v14.9 M748.70 541.2 v14.9" stroke="#6c7180" stroke-width="0.8"/>
<text x="725.30" y="549.3" font-size="8.6" fill="#000">38</text>
<rect x="750.25" y="530.2" width="23.5" height="9.4" fill="#cdcdcb"/>
<g fill="#050505"><path d="M755.30 530.8 h-2.1 l-1.5 2.3 l0.6 1.8 l-0.6 1.8 l1.5 2.3 h2.1 z"/><path d="M768.50 530.8 h2.1 l1.5 2.3 l-0.6 1.8 l0.6 1.8 l-1.5 2.3 h-2.1 z"/><rect x="757.15" y="533.1" width="3.5" height="3.8"/><rect x="763.15" y="533.1" width="3.5" height="3.8"/></g>
<rect x="749.95" y="513.6" width="23.9" height="14.8" fill="#aaccff" stroke="#97a0b6" stroke-width="0.6"/><path d="M749.95 513.4 v15.2 M773.85 513.4 v15.2" stroke="#6c7180" stroke-width="0.8"/>
<text x="750.45" y="522.1" font-size="8.6" fill="#000">39</text>
<rect x="749.95" y="541.4" width="23.9" height="14.5" fill="#aaccff" stroke="#97a0b6" stroke-width="0.6"/><path d="M749.95 541.2 v14.9 M773.85 541.2 v14.9" stroke="#6c7180" stroke-width="0.8"/>
<text x="750.45" y="549.3" font-size="8.6" fill="#000">40</text>
<path d="M270.30 509.2 l1.5 -2.4 l1.5 2.4 z" fill="#a9a9a6"/><path d="M282.90 506.2 l1.5 2.4 l1.5 -2.4 z" fill="#8e8e8b"/><path d="M295.45 509.2 l1.5 -2.4 l1.5 2.4 z" fill="#a9a9a6"/><path d="M308.05 506.2 l1.5 2.4 l1.5 -2.4 z" fill="#8e8e8b"/><path d="M320.60 509.2 l1.5 -2.4 l1.5 2.4 z" fill="#a9a9a6"/><path d="M333.20 506.2 l1.5 2.4 l1.5 -2.4 z" fill="#8e8e8b"/><path d="M345.75 509.2 l1.5 -2.4 l1.5 2.4 z" fill="#a9a9a6"/><path d="M358.35 506.2 l1.5 2.4 l1.5 -2.4 z" fill="#8e8e8b"/><path d="M370.90 509.2 l1.5 -2.4 l1.5 2.4 z" fill="#a9a9a6"/><path d="M383.50 506.2 l1.5 2.4 l1.5 -2.4 z" fill="#8e8e8b"/><path d="M396.05 509.2 l1.5 -2.4 l1.5 2.4 z" fill="#a9a9a6"/><path d="M408.65 506.2 l1.5 2.4 l1.5 -2.4 z" fill="#8e8e8b"/><path d="M421.20 509.2 l1.5 -2.4 l1.5 2.4 z" fill="#a9a9a6"/><path d="M433.80 506.2 l1.5 2.4 l1.5 -2.4 z" fill="#8e8e8b"/><path d="M446.35 509.2 l1.5 -2.4 l1.5 2.4 z" fill="#a9a9a6"/><path d="M458.95 506.2 l1.5 2.4 l1.5 -2.4 z" fill="#8e8e8b"/><path d="M473.00 509.2 l1.5 -2.4 l1.5 2.4 z" fill="#a9a9a6"/><path d="M485.60 506.2 l1.5 2.4 l1.5 -2.4 z" fill="#8e8e8b"/><path d="M498.15 509.2 l1.5 -2.4 l1.5 2.4 z" fill="#a9a9a6"/><path d="M510.75 506.2 l1.5 2.4 l1.5 -2.4 z" fill="#8e8e8b"/><path d="M523.30 509.2 l1.5 -2.4 l1.5 2.4 z" fill="#a9a9a6"/><path d="M535.90 506.2 l1.5 2.4 l1.5 -2.4 z" fill="#8e8e8b"/><path d="M548.45 509.2 l1.5 -2.4 l1.5 2.4 z" fill="#a9a9a6"/><path d="M561.05 506.2 l1.5 2.4 l1.5 -2.4 z" fill="#8e8e8b"/><path d="M573.60 509.2 l1.5 -2.4 l1.5 2.4 z" fill="#a9a9a6"/><path d="M586.20 506.2 l1.5 2.4 l1.5 -2.4 z" fill="#8e8e8b"/><path d="M598.75 509.2 l1.5 -2.4 l1.5 2.4 z" fill="#a9a9a6"/><path d="M611.35 506.2 l1.5 2.4 l1.5 -2.4 z" fill="#8e8e8b"/><path d="M623.90 509.2 l1.5 -2.4 l1.5 2.4 z" fill="#a9a9a6"/><path d="M636.50 506.2 l1.5 2.4 l1.5 -2.4 z" fill="#8e8e8b"/><path d="M649.05 509.2 l1.5 -2.4 l1.5 2.4 z" fill="#a9a9a6"/><path d="M661.65 506.2 l1.5 2.4 l1.5 -2.4 z" fill="#8e8e8b"/><path d="M676.10 509.2 l1.5 -2.4 l1.5 2.4 z" fill="#a9a9a6"/><path d="M688.70 506.2 l1.5 2.4 l1.5 -2.4 z" fill="#8e8e8b"/><path d="M701.25 509.2 l1.5 -2.4 l1.5 2.4 z" fill="#a9a9a6"/><path d="M713.85 506.2 l1.5 2.4 l1.5 -2.4 z" fill="#8e8e8b"/><path d="M726.40 509.2 l1.5 -2.4 l1.5 2.4 z" fill="#a9a9a6"/><path d="M739.00 506.2 l1.5 2.4 l1.5 -2.4 z" fill="#8e8e8b"/><path d="M751.55 509.2 l1.5 -2.4 l1.5 2.4 z" fill="#a9a9a6"/><path d="M764.15 506.2 l1.5 2.4 l1.5 -2.4 z" fill="#8e8e8b"/>
<text x="268.4" y="509.4" font-size="3.6" fill="#444">1</text><text x="464.6" y="509.2" font-size="3.2" fill="#444">16 17</text><text x="667.8" y="509.2" font-size="3.2" fill="#444">32 33</text><path d="M774.6 505.6 l-2.6 2.1 l2.6 2.1 z" fill="#223"/>
<g stroke="#0000ff" stroke-width="1.9" fill="none">
<path d="M280.3 556 V615.5"/>
<path d="M305.4 556 V615.5"/>
<path d="M330.5 556 V615.5"/>
<path d="M355.5 556 V615.5"/>
<path d="M380.7 556 V615.5"/>
<path d="M405.9 556 V615.5"/>
<path d="M330.9 494 V513" stroke-width="1.4"/>
<path d="M356.1 494 V513" stroke-width="1.4"/>
<path d="M381.2 494 V513" stroke-width="1.4"/>
<path d="M406.4 494 V513" stroke-width="1.4"/>
<path d="M431.6 494 V513" stroke-width="1.4"/>
<path d="M762.2 556 V615.5" stroke-width="1.7"/>
</g>
<rect x="268.3" y="614.9" width="23.8" height="14.8" fill="#aaccff"/>
<path d="M292.1 620.9 V629.7 H283.3 Z" fill="#ffee00" stroke="#222" stroke-width="0.7" stroke-linejoin="miter"/>
<rect x="293.4" y="614.9" width="23.8" height="14.8" fill="#aaccff"/>
<path d="M317.2 620.9 V629.7 H308.4 Z" fill="#ffee00" stroke="#222" stroke-width="0.7" stroke-linejoin="miter"/>
<rect x="318.4" y="614.9" width="23.8" height="14.8" fill="#aaccff"/>
<path d="M342.2 620.9 V629.7 H333.4 Z" fill="#ffee00" stroke="#222" stroke-width="0.7" stroke-linejoin="miter"/>
<rect x="343.3" y="614.9" width="23.8" height="14.8" fill="#aaccff"/>
<path d="M367.1 620.9 V629.7 H358.3 Z" fill="#ffee00" stroke="#222" stroke-width="0.7" stroke-linejoin="miter"/>
<rect x="368.9" y="614.9" width="24.0" height="14.8" fill="#aaccff"/>
<path d="M392.9 620.9 V629.7 H384.1 Z" fill="#ffee00" stroke="#222" stroke-width="0.7" stroke-linejoin="miter"/>
<rect x="393.8" y="614.9" width="24.1" height="14.8" fill="#aaccff"/>
<path d="M417.9 620.9 V629.7 H409.1 Z" fill="#ffee00" stroke="#222" stroke-width="0.7" stroke-linejoin="miter"/>
<rect x="750.1" y="614.9" width="23.7" height="14.8" fill="#aaccff"/>
<path d="M773.8 620.9 V629.7 H765.0 Z" fill="#ffee00" stroke="#222" stroke-width="0.7" stroke-linejoin="miter"/>
<text x="750.5" y="623.4" font-size="8.6" fill="#000">17</text>
<text transform="translate(770.2 596.2) rotate(-90)" font-size="8.4" fill="#000" textLength="18.6" lengthAdjust="spacingAndGlyphs">Fiber</text>
</svg>
<span id="t0" class="tx" style="left:-13.0px;top:22.31px;font-size:12.8px;line-height:12.8px;font-weight:bold;color:#fff;transform:scaleX(0.8991);">Discovery</span>
<span id="t1" class="tx" style="left:67.5px;top:22.31px;font-size:12.8px;line-height:12.8px;font-weight:bold;color:#fff;transform:scaleX(0.9026);">Import</span>
<span id="t2" class="tx" style="left:128.1px;top:22.31px;font-size:12.8px;line-height:12.8px;font-weight:bold;color:#fff;transform:scaleX(0.8700);">Export</span>
<span id="t3" class="tx" style="left:188.0px;top:22.31px;font-size:12.8px;line-height:12.8px;font-weight:bold;color:#fff;transform:scaleX(0.9325);">Ipam</span>
<span id="t4" class="tx" style="left:239.9px;top:22.31px;font-size:12.8px;line-height:12.8px;font-weight:bold;color:#fff;transform:scaleX(0.9204);">Maps</span>
<span id="t5" class="tx" style="left:294.4px;top:22.31px;font-size:12.8px;line-height:12.8px;font-weight:bold;color:#fff;transform:scaleX(0.8813);">Help</span>
<span id="t6" class="tx" style="left:6.6px;top:105.31px;font-size:11px;line-height:11px;font-weight:normal;color:#8a8a8a;transform:scaleX(0.9284);">Align</span>
<span id="t7" class="tx" style="left:77.5px;top:105.31px;font-size:11px;line-height:11px;font-weight:normal;color:#8a8a8a;transform:scaleX(0.9251);">Layout</span>
<span id="t8" class="tx" style="left:149.4px;top:105.31px;font-size:11px;line-height:11px;font-weight:normal;color:#8a8a8a;transform:scaleX(0.9100);">Curve Line</span>
<span id="t9" class="tx" style="left:224.7px;top:105.31px;font-size:11px;line-height:11px;font-weight:normal;color:#8a8a8a;transform:scaleX(0.9435);">Straighten</span>
<span id="t10" class="tx" style="left:298.6px;top:105.31px;font-size:11px;line-height:11px;font-weight:normal;color:#8a8a8a;transform:scaleX(0.9319);">Bend Point</span>
<span id="t11" class="tx" style="left:377.9px;top:105.31px;font-size:11px;line-height:11px;font-weight:normal;color:#8a8a8a;transform:scaleX(0.9230);">Separate</span>
<span id="t12" class="tx" style="left:461.5px;top:105.31px;font-size:11px;line-height:11px;font-weight:normal;color:#8a8a8a;transform:scaleX(0.9129);">Undo</span>
<span id="t13" class="tx" style="left:536.7px;top:105.31px;font-size:11px;line-height:11px;font-weight:normal;color:#8a8a8a;transform:scaleX(0.8938);">Redo</span>
<span id="t14" class="tx" style="left:-17.0px;top:143.31px;font-size:12.6px;line-height:12.6px;font-weight:normal;color:#858585;-webkit-text-stroke:0.35px #858585;transform:scaleX(0.9753);">Top Level</span>
<span id="t15" class="tx" style="left:46.5px;top:143.31px;font-size:12.6px;line-height:12.6px;font-weight:normal;color:#858585;-webkit-text-stroke:0.35px #858585;transform:scaleX(0.8000);">&gt;</span>
<span id="t16" class="tx" style="left:62.8px;top:143.31px;font-size:12.6px;line-height:12.6px;font-weight:normal;color:#858585;-webkit-text-stroke:0.35px #858585;transform:scaleX(0.9657);">netTerrain Higher Ed...</span>
<span id="t17" class="tx" style="left:197.0px;top:143.31px;font-size:12.6px;line-height:12.6px;font-weight:normal;color:#858585;-webkit-text-stroke:0.35px #858585;transform:scaleX(0.8000);">&gt;</span>
<span id="t18" class="tx" style="left:212.7px;top:143.31px;font-size:12.6px;line-height:12.6px;font-weight:normal;color:#858585;-webkit-text-stroke:0.35px #858585;transform:scaleX(0.9793);">University of Maryland</span>
<span id="t19" class="tx" style="left:346.6px;top:143.31px;font-size:12.6px;line-height:12.6px;font-weight:normal;color:#858585;-webkit-text-stroke:0.35px #858585;transform:scaleX(0.8429);">&gt;</span>
<span id="t20" class="tx" style="left:361.6px;top:143.31px;font-size:12.6px;line-height:12.6px;font-weight:normal;color:#858585;-webkit-text-stroke:0.35px #858585;transform:scaleX(0.9831);">Brendin Iribe Building</span>
<span id="t21" class="tx" style="left:490.7px;top:143.31px;font-size:12.6px;line-height:12.6px;font-weight:normal;color:#858585;-webkit-text-stroke:0.35px #858585;transform:scaleX(0.8429);">&gt;</span>
<span id="t22" class="tx" style="left:506.7px;top:143.31px;font-size:12.6px;line-height:12.6px;font-weight:normal;color:#858585;-webkit-text-stroke:0.35px #858585;transform:scaleX(0.9884);">4th</span>
<span id="t23" class="tx" style="left:535.2px;top:143.31px;font-size:12.6px;line-height:12.6px;font-weight:normal;color:#858585;-webkit-text-stroke:0.35px #858585;transform:scaleX(0.8286);">&gt;</span>
<span id="t24" class="tx" style="left:552.6px;top:143.31px;font-size:12.6px;line-height:12.6px;font-weight:normal;color:#858585;-webkit-text-stroke:0.35px #858585;transform:scaleX(0.9196);">wc</span>
<span id="t25" class="tx" style="left:577.9px;top:143.31px;font-size:12.6px;line-height:12.6px;font-weight:normal;color:#858585;-webkit-text-stroke:0.35px #858585;transform:scaleX(0.8000);">&gt;</span>
<span id="t26" class="tx" style="left:594.1px;top:143.31px;font-size:12.6px;line-height:12.6px;font-weight:normal;color:#858585;-webkit-text-stroke:0.35px #858585;transform:scaleX(0.8571);">A1</span>
<span id="t27" class="tx" style="left:620.0px;top:143.31px;font-size:12.6px;line-height:12.6px;font-weight:normal;color:#858585;-webkit-text-stroke:0.35px #858585;transform:scaleX(0.9143);">&gt;</span>
<span id="t28" class="tx" style="left:636.0px;top:143.31px;font-size:12.6px;line-height:12.6px;font-weight:bold;color:#111;transform:scaleX(0.9027);">ZQfWTRu6B9_D</span>
<span id="t29" class="tx" style="left:428.0px;top:233.71px;font-size:16px;line-height:16px;font-weight:normal;color:#000;transform:scaleX(1.0136);">ZQfWTRu6B9_D</span>
<div id="dialog" class="abs">
<div id="dlgtop" class="abs"></div>
<div id="dlgsep" class="abs"></div>
<div id="dlgbody" class="abs"></div>
</div>
<div class="fs" style="left:342.8px;top:314.9px;width:168.1px;height:98.8px"></div>
<div class="fs" style="left:514px;top:314.9px;width:167.1px;height:98.8px"></div>
<div class="lg" style="left:351.5px;top:314px;width:52px"></div>
<div class="lg" style="left:522px;top:314px;width:47px"></div>
<div class="radio on" style="left:350.7px;top:331.5px"></div>
<div class="radio" style="left:350.7px;top:351.6px"></div>
<div class="radio" style="left:350.7px;top:371.8px"></div>
<div class="radio" style="left:350.7px;top:391.9px"></div>
<div class="radio on" style="left:522px;top:331.5px"></div>
<div class="radio" style="left:522px;top:351.6px"></div>
<div class="btn" style="left:443.7px;top:425.7px;width:237.5px;height:19.7px"></div>
<div class="btn" style="left:547.5px;top:463.7px;width:54.9px;height:18.6px"></div>
<div class="btn" style="left:606.7px;top:463.7px;width:74.5px;height:18.6px"></div>
<svg width="787" height="656" viewBox="0 0 787 656" style="pointer-events:none">
<path d="M667.8 433 L672 437.2 L676.2 433" stroke="#111" stroke-width="1.8" fill="none"/>
<path d="M702.6 256.2 L700 259.3 L702.6 262.4 M705.9 256.2 L703.3 259.3 L705.9 262.4" stroke="#222" stroke-width="0.9" fill="none"/>
</svg>

<span id="t30" class="tx" style="left:321.8px;top:254.11px;font-size:11.3px;line-height:11.3px;font-weight:normal;color:#111;transform:scaleX(0.9000);">X</span>
<span id="t31" class="tx" style="left:343.3px;top:277.21px;font-size:11px;line-height:11px;font-weight:bold;color:#111;transform:scaleX(0.8962);">Multi Connection</span>
<span id="t32" class="tx" style="left:354.2px;top:308.81px;font-size:11px;line-height:11px;font-weight:bold;color:#111;transform:scaleX(0.8891);">Sequence</span>
<span id="t33" class="tx" style="left:524.6px;top:308.81px;font-size:11px;line-height:11px;font-weight:bold;color:#111;transform:scaleX(0.8988);">Ordering</span>
<span id="t34" class="tx" style="left:369.3px;top:332.31px;font-size:11px;line-height:11px;font-weight:normal;color:#1a1a1a;-webkit-text-stroke:0.2px #1a1a1a;transform:scaleX(0.9170);">By name</span>
<span id="t35" class="tx" style="left:369.3px;top:352.21px;font-size:11px;line-height:11px;font-weight:normal;color:#1a1a1a;-webkit-text-stroke:0.2px #1a1a1a;transform:scaleX(0.9584);">By horizontal position</span>
<span id="t36" class="tx" style="left:369.3px;top:372.60px;font-size:11px;line-height:11px;font-weight:normal;color:#1a1a1a;-webkit-text-stroke:0.2px #1a1a1a;transform:scaleX(0.9608);">By vertical position</span>
<span id="t37" class="tx" style="left:369.3px;top:392.81px;font-size:11px;line-height:11px;font-weight:normal;color:#1a1a1a;-webkit-text-stroke:0.2px #1a1a1a;transform:scaleX(0.9671);">All to All</span>
<span id="t38" class="tx" style="left:539.7px;top:332.31px;font-size:11px;line-height:11px;font-weight:normal;color:#1a1a1a;-webkit-text-stroke:0.2px #1a1a1a;transform:scaleX(0.9600);">Ascending</span>
<span id="t39" class="tx" style="left:539.7px;top:352.21px;font-size:11px;line-height:11px;font-weight:normal;color:#1a1a1a;-webkit-text-stroke:0.2px #1a1a1a;transform:scaleX(0.9400);">Descending</span>
<span id="t40" class="tx" style="left:343.5px;top:430.21px;font-size:11px;line-height:11px;font-weight:normal;color:#1a1a1a;-webkit-text-stroke:0.2px #1a1a1a;transform:scaleX(0.9225);">Link Type:</span>
<span id="t41" class="tx" style="left:450.6px;top:430.21px;font-size:11px;line-height:11px;font-weight:normal;color:#111;-webkit-text-stroke:0.2px #1a1a1a;transform:scaleX(0.9387);">1 Strand Patch</span>
<span id="t42" class="tx" style="left:568.9px;top:466.90px;font-size:11px;line-height:11px;font-weight:normal;color:#111;-webkit-text-stroke:0.2px #1a1a1a;transform:scaleX(0.8107);">Ok</span>
<span id="t43" class="tx" style="left:628.5px;top:466.90px;font-size:11px;line-height:11px;font-weight:normal;color:#111;-webkit-text-stroke:0.2px #1a1a1a;transform:scaleX(0.9261);">Cancel</span>

</body></html>
